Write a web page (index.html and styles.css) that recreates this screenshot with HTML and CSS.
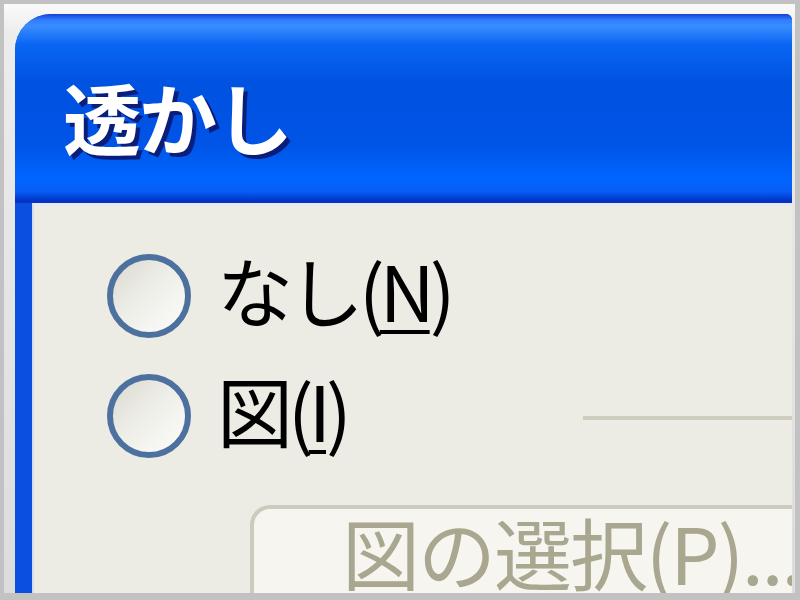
FILE: index.html
```html
<!DOCTYPE html>
<html lang="ja">
<head>
    <meta charset="UTF-8">
    <meta name="viewport" content="width=device-width, initial-scale=1.0">
    <title>透かし</title>
    <link rel="stylesheet" href="styles.css">
</head>
<body>
    <div class="desk">
        <div class="window">
            <div class="titlebar">
                <span class="title">透かし</span>
            </div>
            <div class="client">
                <label class="option">
                    <span class="radio"></span>
                    <span class="label">なし(<u>N</u>)</span>
                </label>
                <label class="option">
                    <span class="radio"></span>
                    <span class="label">図(<u>I</u>)</span>
                    <span class="rule"></span>
                </label>
                <button class="pick" disabled>図の選択(P)...</button>
            </div>
        </div>
    </div>
</body>
</html>
```

FILE: styles.css
```css
* {
    margin: 0;
    padding: 0;
    box-sizing: border-box;
}

body {
    width: 800px;
    height: 600px;
    overflow: hidden;
    background-color: #c2c2c2;
    padding: 4px 5px 7px 4px;
    font-family: "Noto Sans CJK JP", "Noto Sans", sans-serif;
}

.desk {
    height: 100%;
    background: linear-gradient(to bottom, #fafafa 0, #ececec 30px, #dcdcdc 100%);
    padding: 10px 3px 0 11px;
}

.window {
    height: 100%;
    display: flex;
    flex-direction: column;
    background-color: #0a4fe0;
    border-radius: 36px 6px 0 0;
    overflow: hidden;
}

/* barra de titulo */
.titlebar {
    height: 189px;
    flex-shrink: 0;
    display: flex;
    align-items: center;
    padding: 14px 0 0 48px;
    background: linear-gradient(to bottom,
        #1a3fd4 0, #2f7dff 6px, #3a8cff 12px, #0a66f4 30px,
        #0052e0 70px, #0054e6 130px, #0066ff 165px,
        #0a5cf4 178px, #0036c8 186px, #0a30c0 189px);
}

.title {
    color: #fff;
    font-size: 78px;
    font-weight: 700;
    letter-spacing: -2px;
    line-height: 1;
    text-shadow: 4px 4px 0 #0b1d7a;
}

.client {
    flex: 1;
    margin-left: 17px;
    background-color: #ecebe4;
    border-top: 3px solid #e6e8f4;
    border-left: 2px solid #d6dcf0;
    padding: 46px 0 0 73px;
    display: flex;
    flex-direction: column;
    align-items: flex-start;
}

.option {
    display: flex;
    align-items: center;
    height: 88px;
    margin-bottom: 32px;
    width: 100%;
}

.option:last-of-type {
    margin-bottom: 0;
}

.radio {
    width: 84px;
    height: 84px;
    border-radius: 50%;
    border: 6px solid #4c719e;
    background: linear-gradient(135deg, #d9d8d0 0, #eeeee8 45%, #fcfcfb 100%);
    flex-shrink: 0;
}

.label {
    margin: -14px 0 0 26px;
    font-size: 76px;
    line-height: 1;
    letter-spacing: -5px;
    color: #000;
}

.label u {
    text-decoration-thickness: 4px;
    text-underline-offset: 8px;
}

.rule {
    flex: 1;
    height: 4px;
    margin-left: 236px;
    margin-top: 4px;
    background-color: #cfcdbd;
}

.pick {
    margin: 45px 0 0 143px;
    width: 100%;
    flex: 1;
    text-align: left;
    border: 4px solid #cdcbbc;
    border-right: none;
    border-bottom: none;
    border-radius: 20px 0 0 0;
    background-color: #f6f5f0;
    padding: 0 0 0 88px;
    font-family: "Noto Sans CJK JP", "Noto Sans", sans-serif;
    font-size: 78px;
    line-height: 1;
    letter-spacing: -2px;
    color: #a9a78f;
    white-space: nowrap;
    overflow: hidden;
}
```
